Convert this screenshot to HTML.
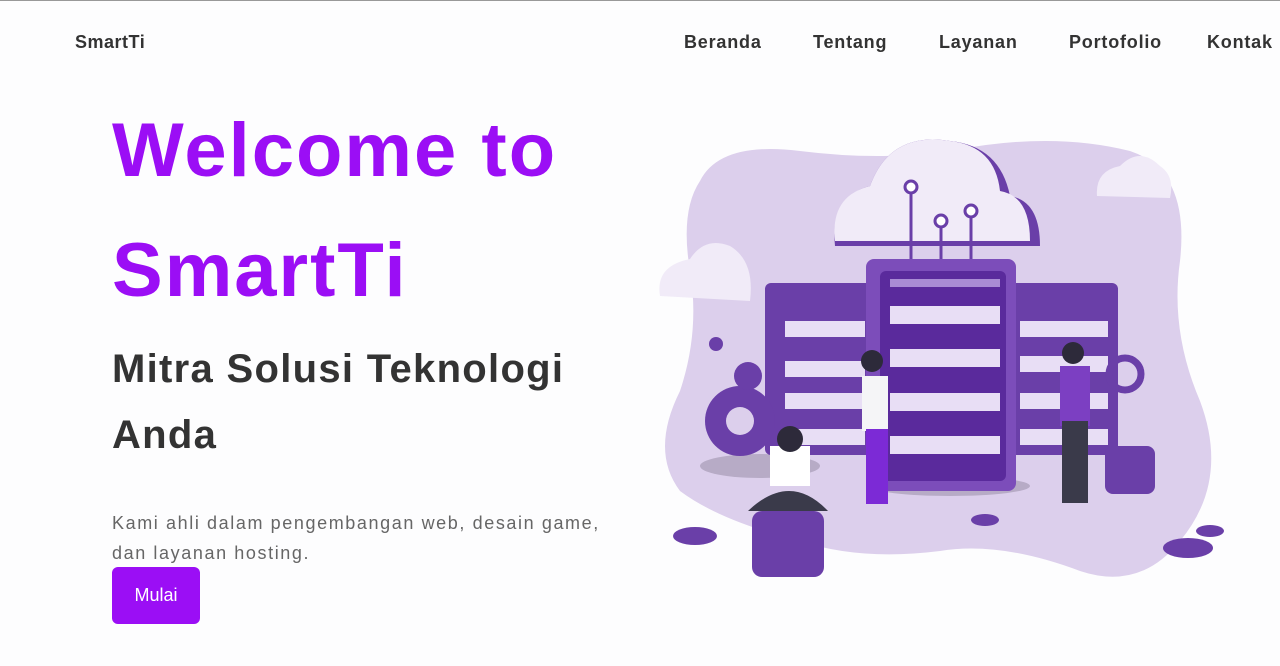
<!DOCTYPE html>
<html><head><meta charset="utf-8"><style>
*{margin:0;padding:0;box-sizing:border-box}
body{width:1280px;height:665px;overflow:hidden;background:#fdfdfe;font-family:"Liberation Sans",sans-serif;border-top:1px solid #999;position:relative}
.logo{position:absolute;left:75px;top:31px;font-size:18px;font-weight:bold;color:#333;letter-spacing:.5px}
nav{position:absolute;top:31px;left:684px;font-size:18px;font-weight:bold;color:#333;letter-spacing:.8px}
nav span{position:absolute;white-space:nowrap}
h1{position:absolute;left:112px;top:90px;font-size:76px;line-height:120px;color:#9b0ef5;font-weight:bold;letter-spacing:2px;white-space:nowrap}
h2{position:absolute;left:112px;top:335px;font-size:40px;line-height:66px;color:#333;font-weight:bold;width:520px;letter-spacing:1.3px}
p{position:absolute;left:112px;top:507px;font-size:18px;line-height:30px;color:#666;letter-spacing:1.6px;white-space:nowrap}
.btn{position:absolute;left:112px;top:566px;width:88px;height:57px;background:#9b0ef5;border-radius:6px;color:#fff;font-size:18px;line-height:57px;text-align:center}
svg{position:absolute;left:0;top:0}
</style></head><body>
<div class="logo">SmartTi</div>
<nav><span style="left:0">Beranda</span><span style="left:129px">Tentang</span><span style="left:255px">Layanan</span><span style="left:385px">Portofolio</span><span style="left:523px">Kontak</span></nav>
<h1>Welcome to<br>SmartTi</h1>
<h2>Mitra Solusi Teknologi Anda</h2>
<p>Kami ahli dalam pengembangan web, desain game,<br>dan layanan hosting.</p>
<div class="btn">Mulai</div>
<svg width="1280" height="665">
<path d="M700 180 Q720 140 800 150 Q880 160 950 150 Q1050 130 1130 150 Q1190 170 1180 260 Q1170 330 1200 400 Q1230 480 1180 540 Q1140 590 1080 570 Q1000 540 940 550 Q860 560 800 540 Q720 520 680 490 Q650 450 680 390 Q700 330 690 270 Q680 210 700 180Z" fill="#dccfec"/>
<ellipse cx="760" cy="465" rx="60" ry="12" fill="#b7abc6"/>
<ellipse cx="950" cy="485" rx="80" ry="10" fill="#b7abc6"/>
<path d="M835 245 Q830 195 870 185 Q890 130 950 140 Q1000 145 1010 195 Q1040 200 1040 245Z" fill="#6a3fa8"/>
<path d="M835 240 Q830 195 870 185 Q890 130 950 140 Q995 145 1000 190 Q1030 195 1030 240Z" fill="#f1ebf8"/>
<path d="M660 295 Q655 265 690 258 Q705 235 730 245 Q755 260 750 300Z" fill="#f1ebf8"/>
<path d="M1097 195 Q1095 170 1120 165 Q1140 145 1160 165 Q1175 175 1170 197Z" fill="#f1ebf8"/>
<g stroke="#6a3fa8" stroke-width="3" fill="none"><path d="M911 190V262M941 225V262M971 215V262"/><circle cx="911" cy="186" r="6" fill="#fff"/><circle cx="941" cy="220" r="6" fill="#fff"/><circle cx="971" cy="210" r="6" fill="#fff"/></g>
<rect x="765" y="282" width="110" height="172" rx="6" fill="#6a3fa8"/>
<rect x="1010" y="282" width="108" height="172" rx="6" fill="#6a3fa8"/>
<g fill="#e8def5"><rect x="785" y="320" width="80" height="16"/><rect x="785" y="360" width="80" height="16"/><rect x="785" y="392" width="80" height="16"/><rect x="785" y="428" width="80" height="16"/>
<rect x="1020" y="320" width="88" height="16"/><rect x="1020" y="355" width="88" height="16"/><rect x="1020" y="392" width="88" height="16"/><rect x="1020" y="428" width="88" height="16"/></g>
<rect x="866" y="258" width="150" height="232" rx="8" fill="#7c4dba"/>
<rect x="880" y="270" width="126" height="210" rx="6" fill="#5a2a9c"/>
<g fill="#e8def5"><rect x="890" y="305" width="110" height="18"/><rect x="890" y="348" width="110" height="18"/><rect x="890" y="392" width="110" height="18"/><rect x="890" y="435" width="110" height="18"/><rect x="890" y="278" width="110" height="8" fill="#a98bd4"/></g>
<circle cx="740" cy="420" r="35" fill="#6a3fa8"/><circle cx="740" cy="420" r="14" fill="#dccfec"/>
<circle cx="748" cy="375" r="14" fill="#6a3fa8"/><circle cx="716" cy="343" r="7" fill="#6a3fa8"/>
<circle cx="1125" cy="373" r="16" fill="none" stroke="#6a3fa8" stroke-width="7"/>
<g fill="#6a3fa8"><rect x="752" y="510" width="72" height="66" rx="10"/><rect x="1105" y="445" width="50" height="48" rx="8"/><ellipse cx="695" cy="535" rx="22" ry="9"/><ellipse cx="1188" cy="547" rx="25" ry="10"/><ellipse cx="985" cy="519" rx="14" ry="6"/><ellipse cx="1210" cy="530" rx="14" ry="6"/></g>
<rect x="770" y="445" width="40" height="40" fill="#fff"/><path d="M748 510 Q790 470 828 510Z" fill="#3a3a4a"/><circle cx="790" cy="438" r="13" fill="#2d2a3a"/>
<rect x="862" y="375" width="26" height="55" fill="#f5f5f7"/><rect x="866" y="428" width="22" height="75" fill="#7c2ad6"/><circle cx="872" cy="360" r="11" fill="#2d2a3a"/>
<rect x="1060" y="365" width="30" height="60" fill="#7c3fc2"/><rect x="1062" y="420" width="26" height="82" fill="#3a3a4a"/><circle cx="1073" cy="352" r="11" fill="#2d2a3a"/>
</svg>
</body></html>
